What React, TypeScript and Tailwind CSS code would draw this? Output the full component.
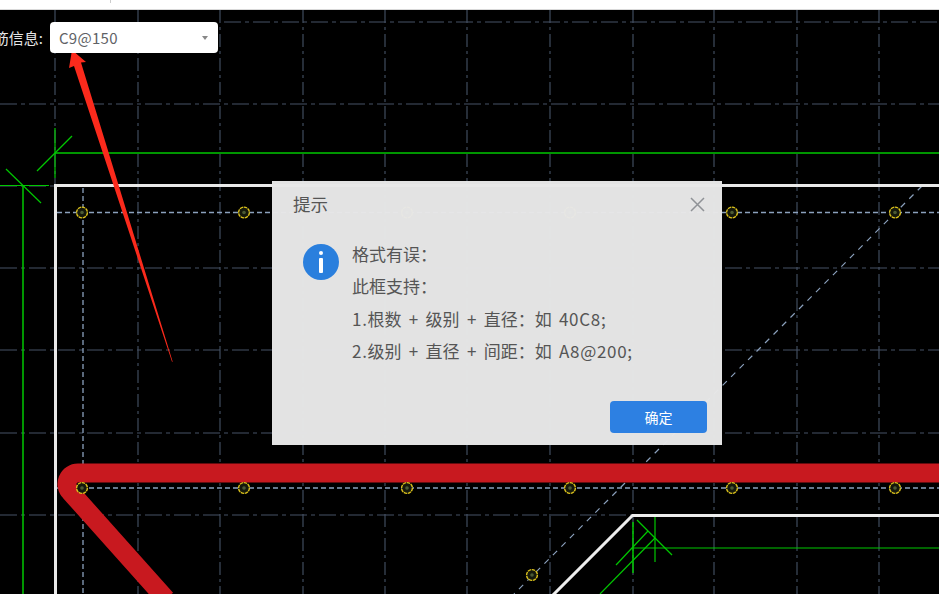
import React from "react";

const gridX = [55, 138, 220, 303, 385, 467, 550, 633, 714, 797, 879];
const gridY = [22, 104, 186, 268, 350, 433, 515];
const cols = [82, 244, 407, 570, 732, 895];
const COLON = "\uFF1A";

function Rebar({ x, y }: { x: number; y: number }) {
  return (
    <g>
      <circle cx={x} cy={y} r={5.4} fill="#14180c" stroke="#dcc21c" strokeWidth={1.4} strokeDasharray="3.4 0.7" />
      <circle cx={x} cy={y} r={1.8} fill="#4b5a33" />
    </g>
  );
}

function Drawing() {
  return (
    <svg className="absolute inset-0 w-[939px] h-[584px]" viewBox="0 10 939 584" fill="none">
      {gridX.map((x) => (
        <line key={x} x1={x} y1={10} x2={x} y2={594} stroke="#465366" strokeWidth={1.1} strokeDasharray="13 4 3 4" />
      ))}
      {gridY.map((y) => (
        <line key={y} x1={y === 22 ? 224 : 0} y1={y} x2={939} y2={y} stroke="#465366" strokeWidth={1.1} strokeDasharray="17 4 4 4" />
      ))}

      {/* cover lines */}
      <line x1={83} y1={188} x2={83} y2={594} stroke="#8ba1bd" strokeWidth={1.3} strokeDasharray="5 3" />
      <line x1={57} y1={212.5} x2={939} y2={212.5} stroke="#8ba1bd" strokeWidth={1.3} strokeDasharray="5 3" />
      <line x1={57} y1={488} x2={939} y2={488} stroke="#8ba1bd" strokeWidth={1.3} strokeDasharray="5 3" />
      <line x1={922} y1={186} x2={514} y2={594} stroke="#8ba1bd" strokeWidth={1.2} strokeDasharray="6 6" />

      {/* green axes */}
      <g stroke="#00c800" strokeWidth={1.2}>
        <line x1={55} y1={153} x2={939} y2={153} strokeWidth={1.5} />
        <line x1={55} y1={128} x2={55} y2={178} />
        <line x1={37} y1={171} x2={72} y2={136} />
        <line x1={0} y1={185.5} x2={49} y2={185.5} />
        <line x1={23} y1={185} x2={23} y2={594} strokeWidth={1.5} />
        <line x1={6} y1={169} x2={41} y2={203} />
        <line x1={632} y1={548} x2={939} y2={548} />
        <line x1={633} y1={522} x2={633} y2={573} strokeWidth={1.5} />
        <line x1={655} y1={514} x2={655} y2={562} />
        <line x1={637} y1={520} x2={672} y2={555} />
        <line x1={616} y1={565} x2={648} y2={531} />
        <line x1={600} y1={594} x2={655} y2={538} />
      </g>

      {/* concrete outline */}
      <path d="M939 185.5H55.5V594" stroke="#e9e9e9" strokeWidth={3} />
      <path d="M939 515.5H632.5L552 596" stroke="#eeeeee" strokeWidth={3} />

      {/* main bar */}
      <path d="M945 473H78A11 11 0 0 0 70.2 491.8L166 599" stroke="#c8191f" strokeWidth={19} />

      {cols.map((x) => (
        <Rebar key={`t${x}`} x={x} y={212.5} />
      ))}
      {cols.map((x) => (
        <Rebar key={`b${x}`} x={x} y={488} />
      ))}
      <Rebar x={532} y={575} />

      {/* annotation arrow */}
      <polygon points="72,50 86,62 81,62.5 172.7,361.7 172,361.7 74,66 69,68" fill="#fb2a1c" />
    </svg>
  );
}

function Latin({ children }: { children: React.ReactNode }) {
  return <span className="tracking-[0.7px]">{children}</span>;
}

export default function App() {
  return (
    <div
      className="relative w-[939px] h-[594px] overflow-hidden flex flex-col bg-black"
      style={{ fontFamily: '"Noto Sans CJK SC", "Noto Sans", sans-serif' }}
    >
      <div className="relative h-[10px] shrink-0 bg-white border-b border-[#d9d9d9]">
        <div className="absolute left-[110px] top-0 h-[3px] w-px bg-[#cccccc]" />
      </div>

      <div className="relative flex-1">
        <Drawing />
      </div>

      {/* reinforcement field */}
      <div className="absolute left-0 top-[22px] flex h-[31px] items-center">
        <div className="flex w-[43px] justify-end overflow-hidden whitespace-nowrap pt-px text-[15px] text-[#e6e6e6]">
          <span className="shrink-0">钢筋信息:</span>
        </div>
        <div className="ml-[7px] flex h-[31px] w-[168px] items-center justify-between rounded-[4px] bg-white pl-[9px] pr-[10px] pt-px text-[15px] text-[#606266]">
          <span className="tracking-[0.3px]">C9@150</span>
          <span className="h-0 w-0 border-x-[3px] border-t-[4px] border-x-transparent border-t-[#888888]" />
        </div>
      </div>

      {/* message box */}
      <div className="absolute left-[272px] top-[181px] flex h-[264px] w-[450px] flex-col bg-[#e8e8e8]/[0.98] text-[#555555]">
        <div className="flex items-start justify-between pl-[21px] pr-[17px] pt-[10px]">
          <span className="text-[17.5px] leading-[26px]">提示</span>
          <svg className="mt-[5px]" width="16" height="16" viewBox="0 0 16 16" fill="none" stroke="#8f9296" strokeWidth="1.5">
            <path d="M2 2L15 15M15 2L2 15" />
          </svg>
        </div>
        <div className="mt-[21px] flex pl-[31px]">
          <div className="mt-[6px] flex h-[36px] w-[36px] shrink-0 items-center justify-center rounded-full bg-[#2a7fdd]">
            <svg width="6" height="22" viewBox="0 0 6 22" fill="#ffffff">
              <rect x="1" y="0" width="4" height="4" rx="2" />
              <rect x="1" y="7" width="4" height="15" rx="1" />
            </svg>
          </div>
          <div className="ml-[13px] whitespace-nowrap text-[17px] leading-[32.4px] [word-spacing:3.5px]">
            <p>格式有误{COLON}</p>
            <p>此框支持{COLON}</p>
            <p>
              <Latin>1.</Latin>根数 + 级别 + 直径{COLON}如 <Latin>40C8;</Latin>
            </p>
            <p>
              <Latin>2.</Latin>级别 + 直径 + 间距{COLON}如 <Latin>A8@200;</Latin>
            </p>
          </div>
        </div>
        <div className="mt-auto flex justify-end pb-[12px] pr-[15px]">
          <button className="h-[32px] w-[97px] rounded-[4px] bg-[#2d80e2] text-[14px] text-white">确定</button>
        </div>
      </div>
    </div>
  );
}
